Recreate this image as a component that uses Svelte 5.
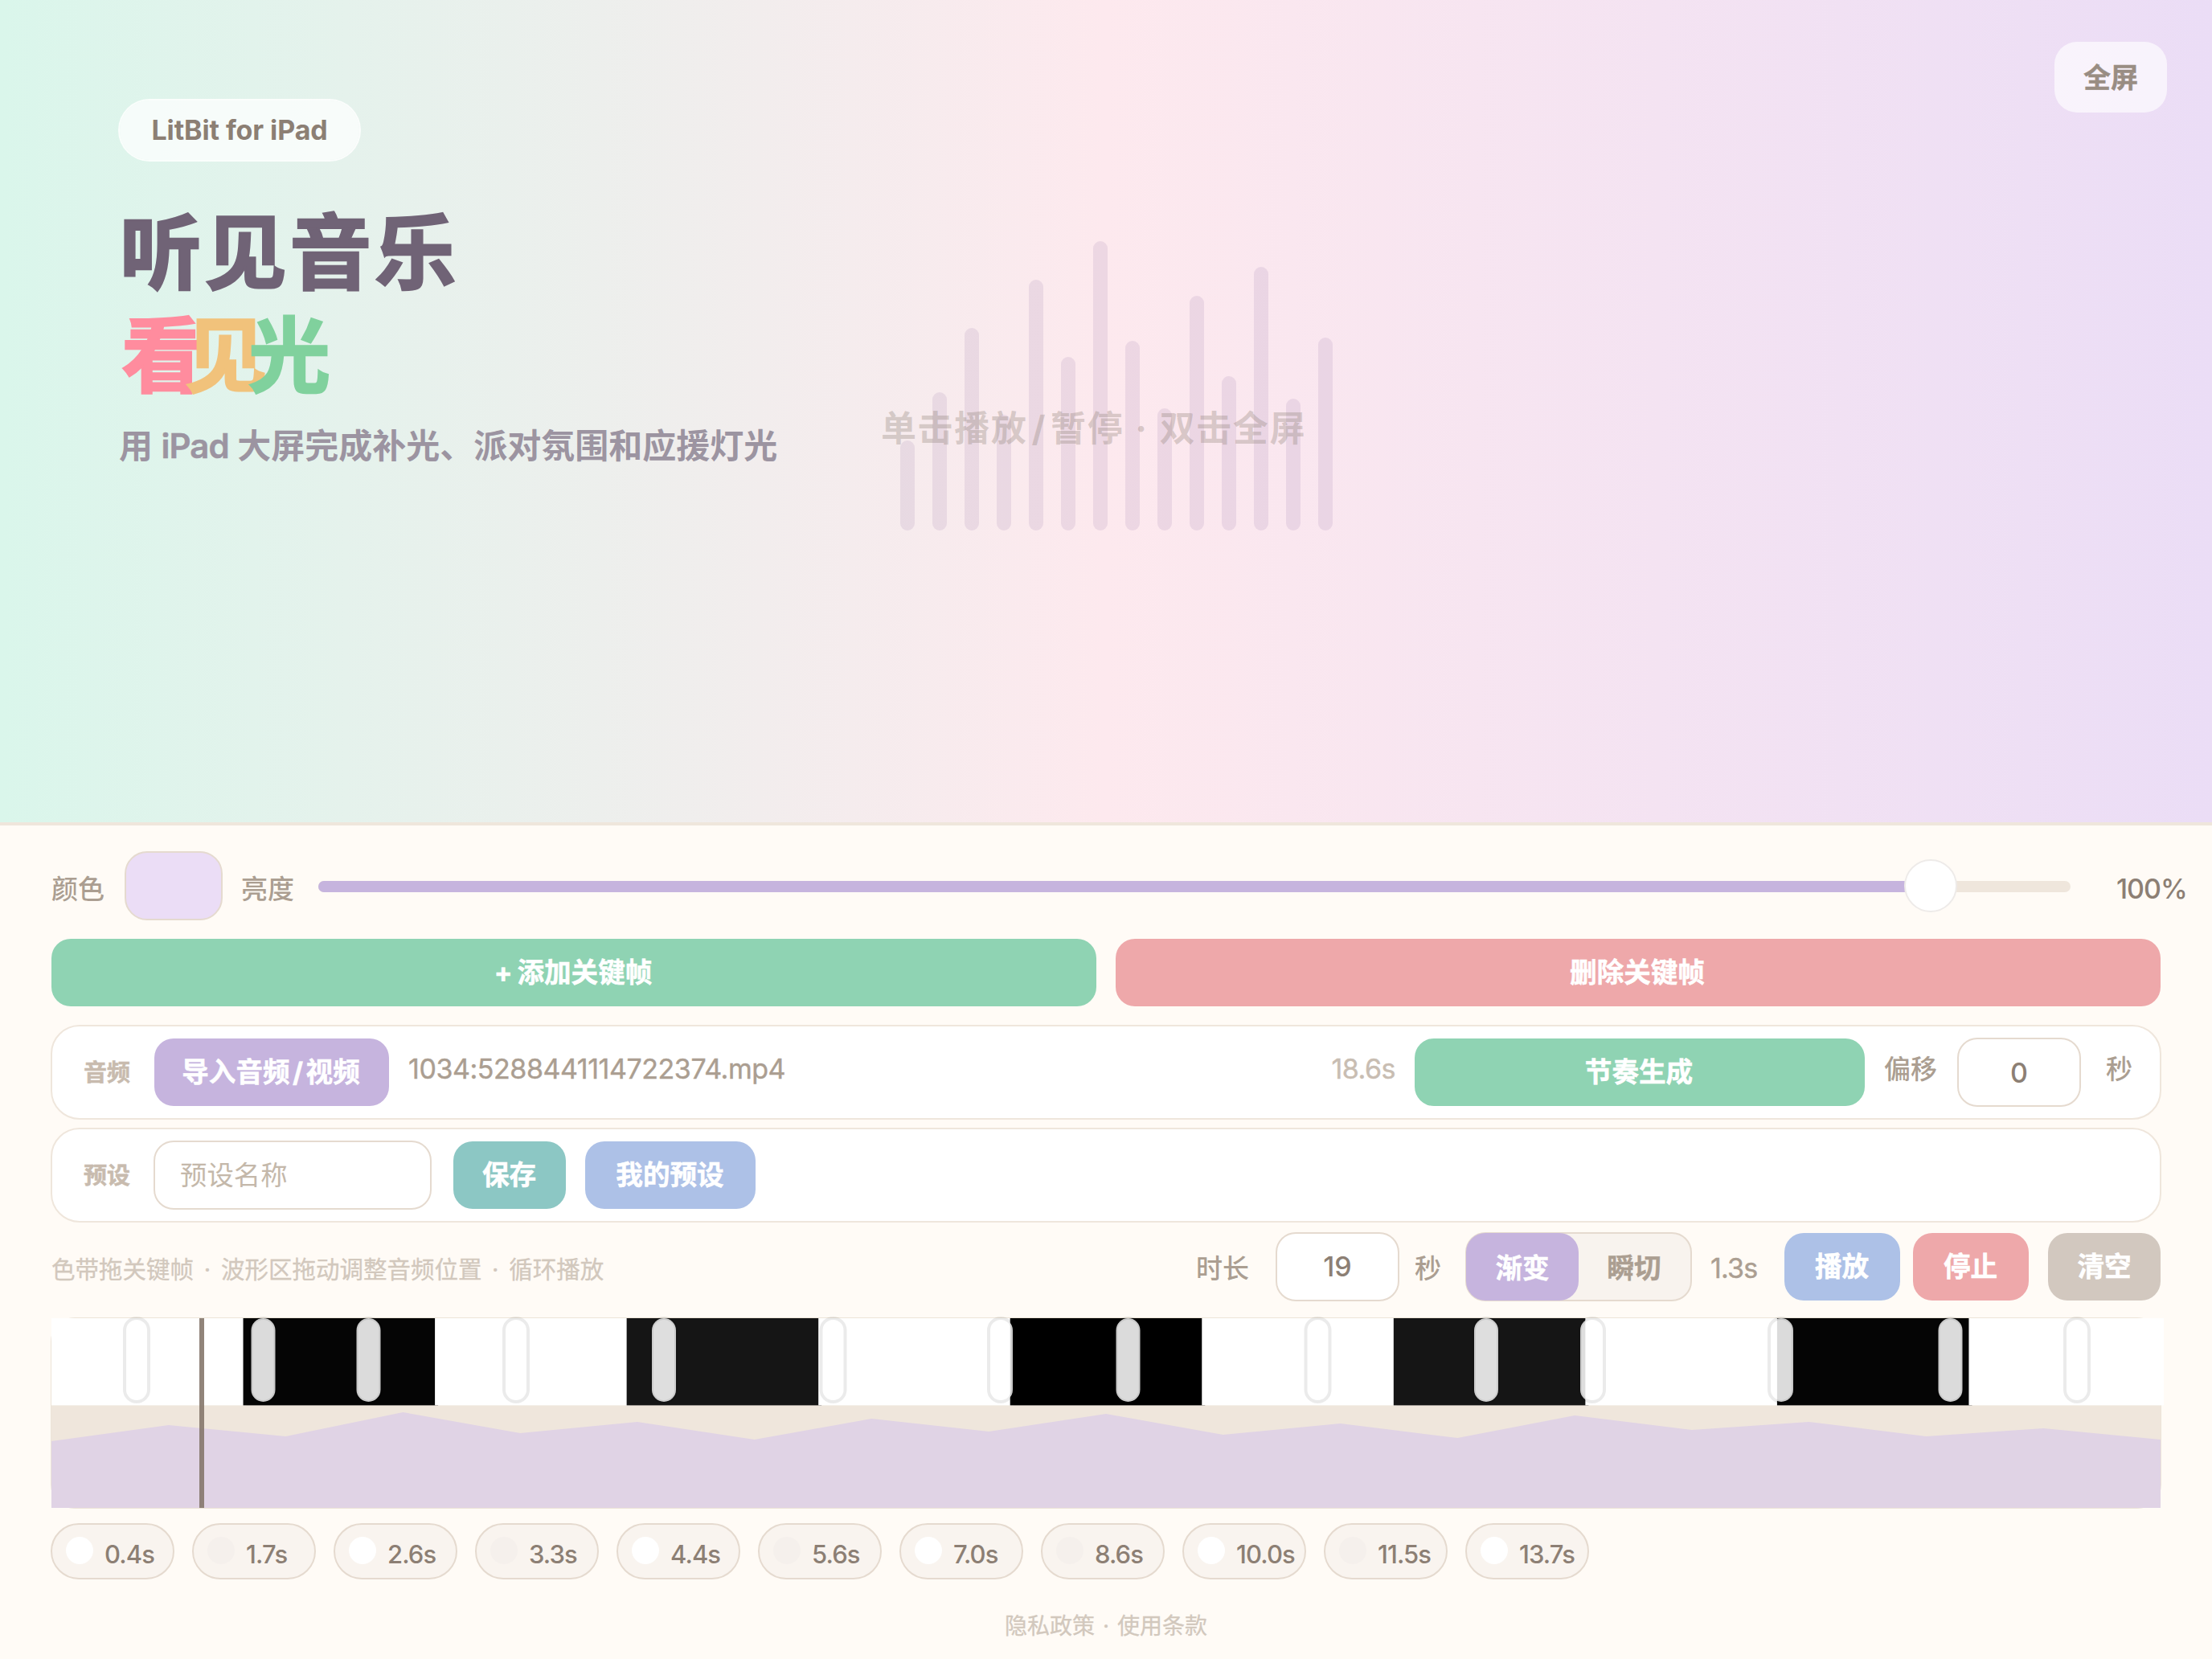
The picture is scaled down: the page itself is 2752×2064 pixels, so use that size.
<script lang="ts">
  const bars = [112, 172, 252, 144, 312, 216, 360, 236, 152, 292, 192, 328, 164, 240];

  const segmentColors = [
    "#fff", "#050505", "#fff", "#151515", "#fff", "#000",
    "#fff", "#151515", "#fff", "#050505", "#fff",
  ];
  const trackWidth = 2624;
  const segmentWidth = trackWidth / segmentColors.length;

  const handles = [106, 263.5, 394.5, 578, 762, 972.5, 1181, 1339.5, 1575.5, 1785, 1917, 2152, 2362.5, 2520];

  const wave = [45, 25, 39, 9, 35, 21, 43, 17, 33, 11, 37, 23, 41, 13, 31, 21, 39, 29, 43];
  const wavePoints = [
    `0,236`,
    ...wave.map((y, i) => `${(i * trackWidth) / (wave.length - 1)},${y + 108}`),
    `${trackWidth},236`,
  ].join(" ");

  const keyframes = [0.4, 1.7, 2.6, 3.3, 4.4, 5.6, 7.0, 8.6, 10.0, 11.5, 13.7];

  let mode = $state("fade");
  let duration = $state("19");
  let offset = $state("0");
  let presetName = $state("");
</script>

<main class="app">
  <section class="hero">
    <div class="intro">
      <div class="badge">LitBit for iPad</div>
      <h1>
        <span class="line">听见音乐</span>
        <span class="line tight"><span class="pink">看</span><span class="amber">见</span><span class="green">光</span></span>
      </h1>
      <p class="subtitle">用 <span class="latin">iPad</span> 大屏完成补光、派对氛围和应援灯光</p>
    </div>
    <div class="bars">
      {#each bars as height}
        <span class="bar" style="height: {height}px"></span>
      {/each}
    </div>
    <p class="hint">单击播放<span class="slash">/</span>暂停 · 双击全屏</p>
    <button class="fullscreen">全屏</button>
  </section>

  <section class="panel">
    <div class="row color-row">
      <span class="label color-label">颜色</span>
      <button class="swatch" aria-label="颜色"></button>
      <span class="label bright-label">亮度</span>
      <div class="slider">
        <div class="fill"></div>
        <div class="knob"></div>
      </div>
      <span class="percent">100%</span>
    </div>

    <div class="row key-row">
      <button class="btn mint">+ 添加关键帧</button>
      <button class="btn rose">删除关键帧</button>
    </div>

    <div class="card">
      <span class="card-label">音频</span>
      <button class="btn purple import">导入音频<span class="slash">/</span>视频</button>
      <span class="label raised file">1034:5288441114722374.mp4</span>
      <span class="label raised length">18.6s</span>
      <button class="btn mint rhythm">节奏生成</button>
      <span class="label raised offset-label">偏移</span>
      <input class="field number" bind:value={offset} aria-label="偏移" />
      <span class="label raised unit">秒</span>
    </div>

    <div class="card preset">
      <span class="card-label">预设</span>
      <input class="field name" bind:value={presetName} placeholder="预设名称" />
      <button class="btn teal save">保存</button>
      <button class="btn blue mine">我的预设</button>
    </div>

    <div class="row control-row">
      <span class="tip">色带拖关键帧 · 波形区拖动调整音频位置 · 循环播放</span>
      <span class="label">时长</span>
      <input class="field number duration" bind:value={duration} aria-label="时长" />
      <span class="label">秒</span>
      <div class="toggle">
        <button class:active={mode === "fade"} onclick={() => (mode = "fade")}>渐变</button>
        <button class:active={mode === "cut"} onclick={() => (mode = "cut")}>瞬切</button>
      </div>
      <span class="label time">1.3s</span>
      <button class="btn blue play">播放</button>
      <button class="btn rose stop">停止</button>
      <button class="btn taupe clear">清空</button>
    </div>

    <div class="timeline">
      <svg width="2628" height="236" viewBox="0 0 2628 236">
        <rect y="108" width={trackWidth} height="128" fill="#efe6dc" />
        {#each segmentColors as color, i}
          <rect x={i * segmentWidth} width={segmentWidth + 4} height="108.4" fill={color} />
        {/each}
        <polygon points={wavePoints} fill="#e0d3e5" />
        {#each handles as x}
          <rect class="handle" x={x - 15} y="0" width="30" height="104" rx="15" />
        {/each}
        <rect x="184" width="6" height="236" fill="#85776b" opacity="0.9" />
      </svg>
    </div>

    <div class="chips">
      {#each keyframes as time, i}
        <button class="chip">
          <span class="dot" class:dim={i % 2 === 1}></span>
          {time.toFixed(1)}s
        </button>
      {/each}
    </div>

    <footer>隐私政策 · 使用条款</footer>
  </section>
</main>

<style>
  :global(body) {
    margin: 0;
    background: #fffbf6;
  }
  .app {
    width: 2752px;
    height: 2064px;
    overflow: hidden;
    background: #fffbf6;
    font-family: Inter, "Noto Sans CJK SC", sans-serif;
    color: #8c7f74;
  }
  button,
  input {
    box-sizing: border-box;
    margin: 0;
    padding: 0;
    border: none;
    font: inherit;
    color: inherit;
  }
  .hero {
    position: relative;
    box-sizing: border-box;
    height: 1023px;
    padding: 123px 0 0 147px;
    background: linear-gradient(90deg, #daf6eb 0%, #fde9ee 50%, #ebddf6 100%);
  }
  .badge {
    box-sizing: border-box;
    width: 302px;
    height: 78px;
    border: 2px solid rgba(255, 255, 255, 0.85);
    border-radius: 39px;
    background: rgba(255, 255, 255, 0.72);
    background-clip: padding-box;
    font-size: 34px;
    font-weight: 700;
    letter-spacing: -0.1px;
    line-height: 73px;
    text-align: center;
  }
  h1 {
    margin: 50px 0 0 1px;
    font-size: 102px;
    font-weight: 700;
    line-height: 128px;
    color: #706376;
    -webkit-text-stroke: 2.4px currentColor;
  }
  .line {
    display: block;
    margin-left: 1px;
    letter-spacing: 3.6px;
  }
  .tight {
    margin-left: 3px;
    letter-spacing: -23px;
  }
  .pink {
    color: #ff8c9e;
  }
  .amber {
    color: #f1c27b;
  }
  .green {
    color: #80d19d;
  }
  .subtitle {
    margin: 18px 0 0 1px;
    font-size: 42px;
    font-weight: 600;
    line-height: 60px;
    color: #9c94a1;
  }
  .latin {
    letter-spacing: -1px;
    -webkit-text-stroke: 0.5px currentColor;
  }
  .bars {
    position: absolute;
    left: 1120px;
    bottom: 363px;
    display: flex;
    align-items: flex-end;
    gap: 22px;
  }
  .bar {
    width: 18px;
    border-radius: 9px;
    background: rgba(150, 120, 175, 0.155);
  }
  .hint {
    position: absolute;
    left: 1096px;
    top: 499px;
    margin: 0;
    font-size: 44px;
    font-weight: 700;
    letter-spacing: 1.6px;
    word-spacing: 2px;
    line-height: 68px;
    white-space: nowrap;
    color: rgba(140, 127, 116, 0.32);
  }
  .hint .slash {
    margin: 0 5px;
  }
  .fullscreen {
    position: absolute;
    top: 52px;
    right: 56px;
    width: 140px;
    height: 88px;
    padding-bottom: 3px;
    border-radius: 28px;
    background: rgba(255, 255, 255, 0.64);
    font-size: 34px;
    font-weight: 700;
    color: #998d83;
    -webkit-text-stroke: 0.4px currentColor;
  }
  .panel {
    box-sizing: border-box;
    height: 1041px;
    padding: 32px 63px 0;
    border-top: 4px solid #efe6dc;
  }
  .row {
    display: flex;
    align-items: center;
    margin: 0 1px;
  }
  .label {
    font-size: 33px;
    font-weight: 500;
    line-height: 48px;
    white-space: nowrap;
    color: #ab9e91;
  }
  .color-row {
    height: 86px;
    margin-right: -60px;
  }
  .color-row .label {
    padding-top: 8px;
  }
  .color-label {
    width: 91px;
  }
  .swatch {
    width: 122px;
    height: 86px;
    margin-right: 23px;
    border: 2px solid #e5dacf;
    border-radius: 28px;
    background: #ebddf6;
  }
  .bright-label {
    width: 96px;
  }
  .slider {
    position: relative;
    width: 2180px;
    height: 14px;
    margin-top: 2px;
    border-radius: 7px;
    background: #efe6dc;
  }
  .fill {
    width: 2006px;
    height: 14px;
    border-radius: 7px;
    background: #c6b4de;
  }
  .knob {
    position: absolute;
    left: 1973px;
    top: -27px;
    box-sizing: border-box;
    width: 66px;
    height: 66px;
    border: 2px solid #eeebe9;
    border-radius: 50%;
    background: #fff;
  }
  .percent {
    margin: 7px 0 0 57px;
    font-size: 34px;
    font-weight: 500;
    letter-spacing: -1px;
  }
  .key-row {
    gap: 24px;
    margin-top: 23px;
  }
  .key-row .btn {
    flex: 1;
    padding-right: 2px;
    word-spacing: -2px;
  }
  .btn {
    height: 84px;
    border-radius: 24px;
    font-size: 33.6px;
    font-weight: 700;
    line-height: 84px;
    color: #fff;
    white-space: nowrap;
    -webkit-text-stroke: 0.5px currentColor;
  }
  .mint {
    background: #8fd3b3;
  }
  .rose {
    background: #eea8aa;
  }
  .purple {
    background: #c6b4de;
  }
  .teal {
    background: #8cc7c4;
  }
  .blue {
    background: #adc1e7;
  }
  .taupe {
    background: #d2c8bf;
  }
  .card {
    display: flex;
    align-items: center;
    box-sizing: border-box;
    height: 118px;
    margin-top: 23px;
    padding: 0 34px 0 39px;
    border: 2px solid #efe6dc;
    border-radius: 36px;
    background: #fff;
  }
  .preset {
    margin-top: 10px;
  }
  .card-label {
    width: 88px;
    padding-bottom: 5px;
    font-size: 29px;
    font-weight: 700;
    color: #c8bbae;
    -webkit-text-stroke: 0.5px currentColor;
  }
  .import {
    width: 292px;
    padding-right: 2px;
  }
  .import .slash {
    margin: 0 3.5px;
  }
  .raised {
    padding-bottom: 8px;
  }
  .file {
    flex: 1;
    margin-left: 24px;
    font-size: 34px;
    font-weight: 400;
    letter-spacing: -0.45px;
    -webkit-text-stroke: 0.4px currentColor;
  }
  .length {
    margin-right: 24px;
    font-size: 34px;
    font-weight: 400;
    letter-spacing: -0.5px;
    color: #c8bdb2;
    -webkit-text-stroke: 0.4px currentColor;
  }
  .rhythm {
    width: 560px;
    padding-right: 2px;
  }
  .field {
    height: 86px;
    border: 2px solid #e5dacf;
    border-radius: 25px;
    background: #fff;
    font-size: 34px;
    outline: none;
  }
  .number {
    width: 154px;
    font-weight: 500;
    text-align: center;
  }
  .offset-label {
    width: 91px;
    margin-left: 24px;
  }
  .unit {
    margin-left: 31px;
  }
  .name {
    width: 346px;
    margin-left: -1px;
    padding: 0 31px;
    font-size: 33.4px;
  }
  .name::placeholder {
    color: #c4b8aa;
    opacity: 1;
  }
  .save {
    width: 140px;
    margin-left: 27px;
    padding-right: 1px;
  }
  .mine {
    width: 212px;
    margin-left: 24px;
    padding-right: 1px;
  }
  .control-row {
    height: 86px;
    margin-top: 12px;
  }
  .control-row .label {
    padding-top: 4px;
  }
  .tip {
    flex: 1;
    padding-top: 2px;
    font-size: 29.5px;
    word-spacing: 4.4px;
    color: #d2c8bd;
    -webkit-text-stroke: 0.3px currentColor;
  }
  .duration {
    margin: 0 19px 0 33px;
    padding-bottom: 2px;
  }
  .toggle {
    display: flex;
    box-sizing: border-box;
    width: 282px;
    height: 86px;
    margin-left: 30px;
    padding: 1px 0;
    border: 2px solid #e5dacf;
    border-radius: 25px;
    background: #f8f3ee;
  }
  .toggle button {
    width: 140px;
    height: 84px;
    margin: -2px 0 0 -1px;
    padding-bottom: 2px;
    border-radius: 24px;
    background: none;
    font-size: 33.6px;
    font-weight: 700;
    color: #ab9e91;
    -webkit-text-stroke: 0.4px currentColor;
  }
  .toggle button.active {
    background: #c6b4de;
    color: #fff;
  }
  .time {
    width: 92px;
    margin-left: 23px;
    font-size: 34px;
    font-weight: 400;
    letter-spacing: -0.8px;
    -webkit-text-stroke: 0.4px currentColor;
  }
  .play,
  .stop {
    width: 144px;
    padding-right: 1px;
  }
  .stop {
    margin: 0 24px 0 16px;
  }
  .clear {
    width: 140px;
  }
  .timeline {
    box-sizing: border-box;
    height: 238px;
    margin-top: 20px;
    border: 1px solid #ece4d8;
    border-radius: 30px;
  }
  .timeline svg {
    display: block;
    overflow: visible;
  }
  .handle {
    fill: rgba(255, 255, 255, 0.86);
    stroke: rgba(0, 0, 0, 0.08);
    stroke-width: 4px;
  }
  .chips {
    display: flex;
    gap: 22px;
    margin-top: 18px;
  }
  .chip {
    display: flex;
    align-items: center;
    width: 154px;
    height: 70px;
    padding: 6px 0 0 17px;
    border: 2px solid #e5dacf;
    border-radius: 35px;
    background: #f9f4ef;
    font-size: 31px;
    font-weight: 500;
    letter-spacing: -0.9px;
    white-space: nowrap;
  }
  .dot {
    flex: none;
    width: 34px;
    height: 34px;
    margin: -8px 14px 0 0;
    border-radius: 50%;
    background: #fff;
  }
  .dot.dim {
    background: #f5f0ec;
  }
  footer {
    margin-top: 38px;
    font-size: 28px;
    word-spacing: 2px;
    line-height: 40px;
    text-align: center;
    color: #d2c8bd;
    -webkit-text-stroke: 0.3px currentColor;
  }
</style>
